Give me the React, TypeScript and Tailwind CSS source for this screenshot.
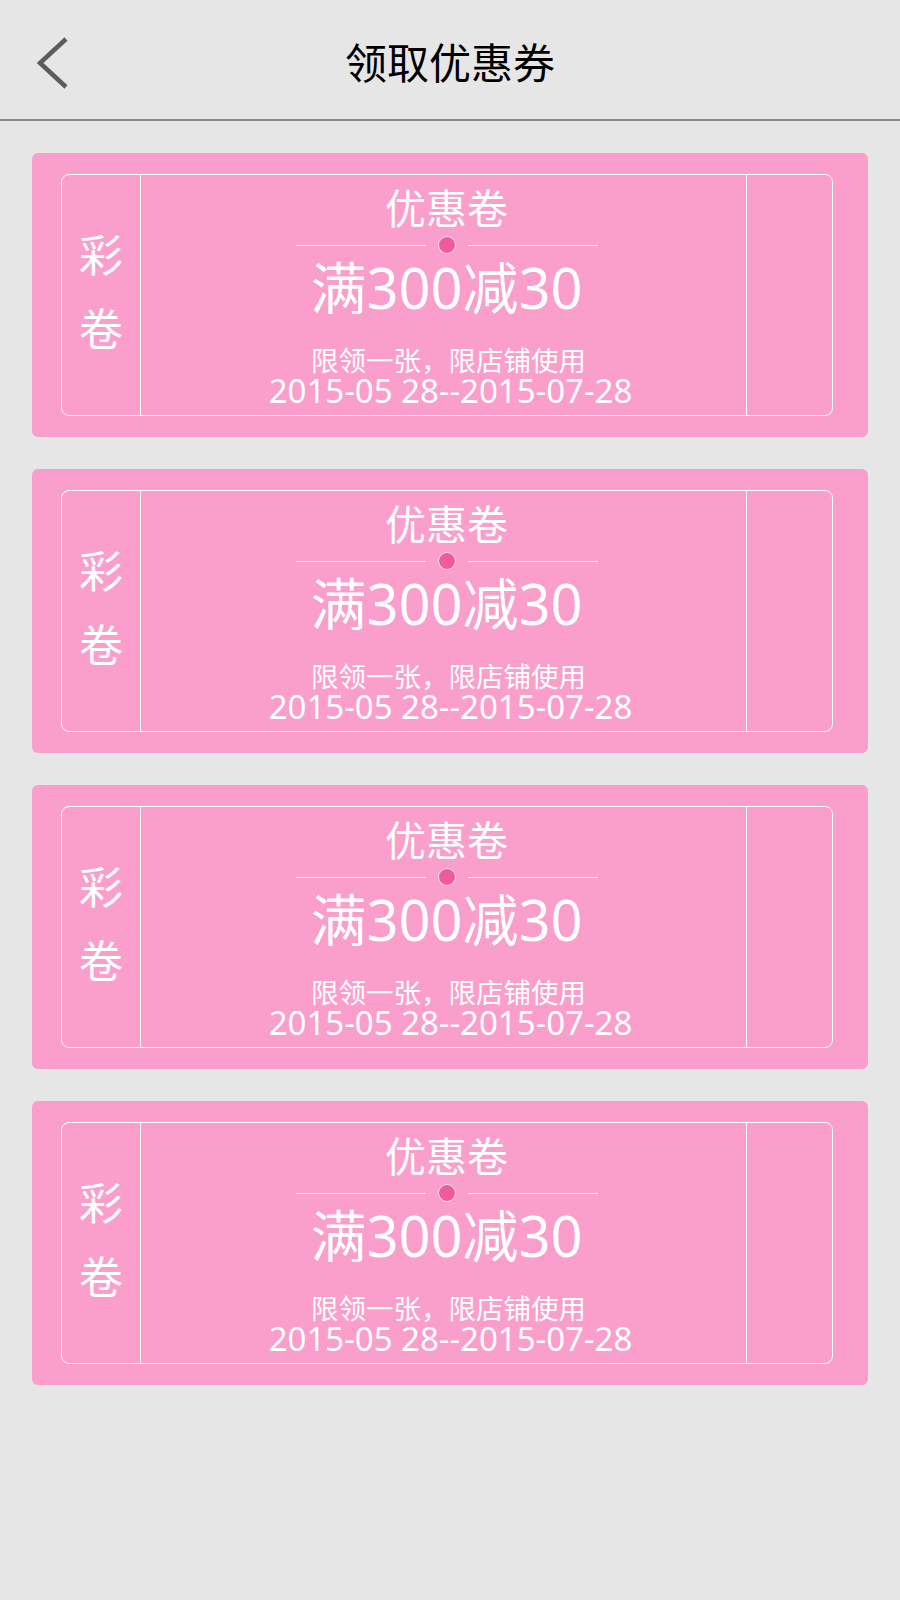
const coupons = [1, 2, 3, 4];

const Coupon = () => {
  return (
    <div className="rounded-[6px] bg-[#fa9ecc] pb-[21px] pl-[29px] pr-[35px] pt-[21px]">
      <div className="flex h-[242px] rounded-[8px] border border-white text-white">
        <div className="flex w-[79px] flex-col items-center justify-center border-r border-white pb-[6px] text-[44px] leading-[74px]">
          <span>彩</span>
          <span>卷</span>
        </div>
        <div className="flex flex-1 flex-col items-center pl-[6px] pt-[13px]">
          <p className="text-[41px] leading-[40px]">优惠卷</p>
          <div className="mt-[8px] flex items-center gap-[12px]">
            <span className="h-px w-[130px] bg-white/90" />
            <span className="h-[18px] w-[18px] rounded-full border border-white/80 bg-[#ee5c9d]" />
            <span className="h-px w-[130px] bg-white/90" />
          </div>
          <p className="mt-[6px] text-[56px] leading-[54px]">满300减30</p>
          <p className="mt-[33px] pl-[4px] text-[27.5px] leading-[27px]">限领一张，限店铺使用</p>
          <p className="pl-[8px] text-[33px] leading-[33px]">2015-05 28--2015-07-28</p>
        </div>
        <div className="w-[86px] border-l border-white" />
      </div>
    </div>
  );
};

const App = () => {
  return (
    <div
      className="min-h-[1600px] w-full bg-[#e6e6e6]"
      style={{ fontFamily: '"Noto Sans", "Noto Sans CJK SC", sans-serif' }}
    >
      <header className="grid h-[121px] grid-cols-[1fr_auto_1fr] items-center border-b-2 border-[#888888] pt-[6px]">
        <div className="pl-[36px]">
          <svg width="34" height="52" viewBox="0 0 34 52" fill="none">
            <path d="M30 2 L4 26 L30 50" stroke="#5c5c5c" strokeWidth="4.5" />
          </svg>
        </div>
        <h1 className="text-[42px] leading-none text-black">领取优惠券</h1>
        <div />
      </header>
      <main className="flex flex-col gap-[32px] px-[32px] pt-[32px]">
        {coupons.map((c) => (
          <Coupon key={c} />
        ))}
      </main>
    </div>
  );
};

export default App;
